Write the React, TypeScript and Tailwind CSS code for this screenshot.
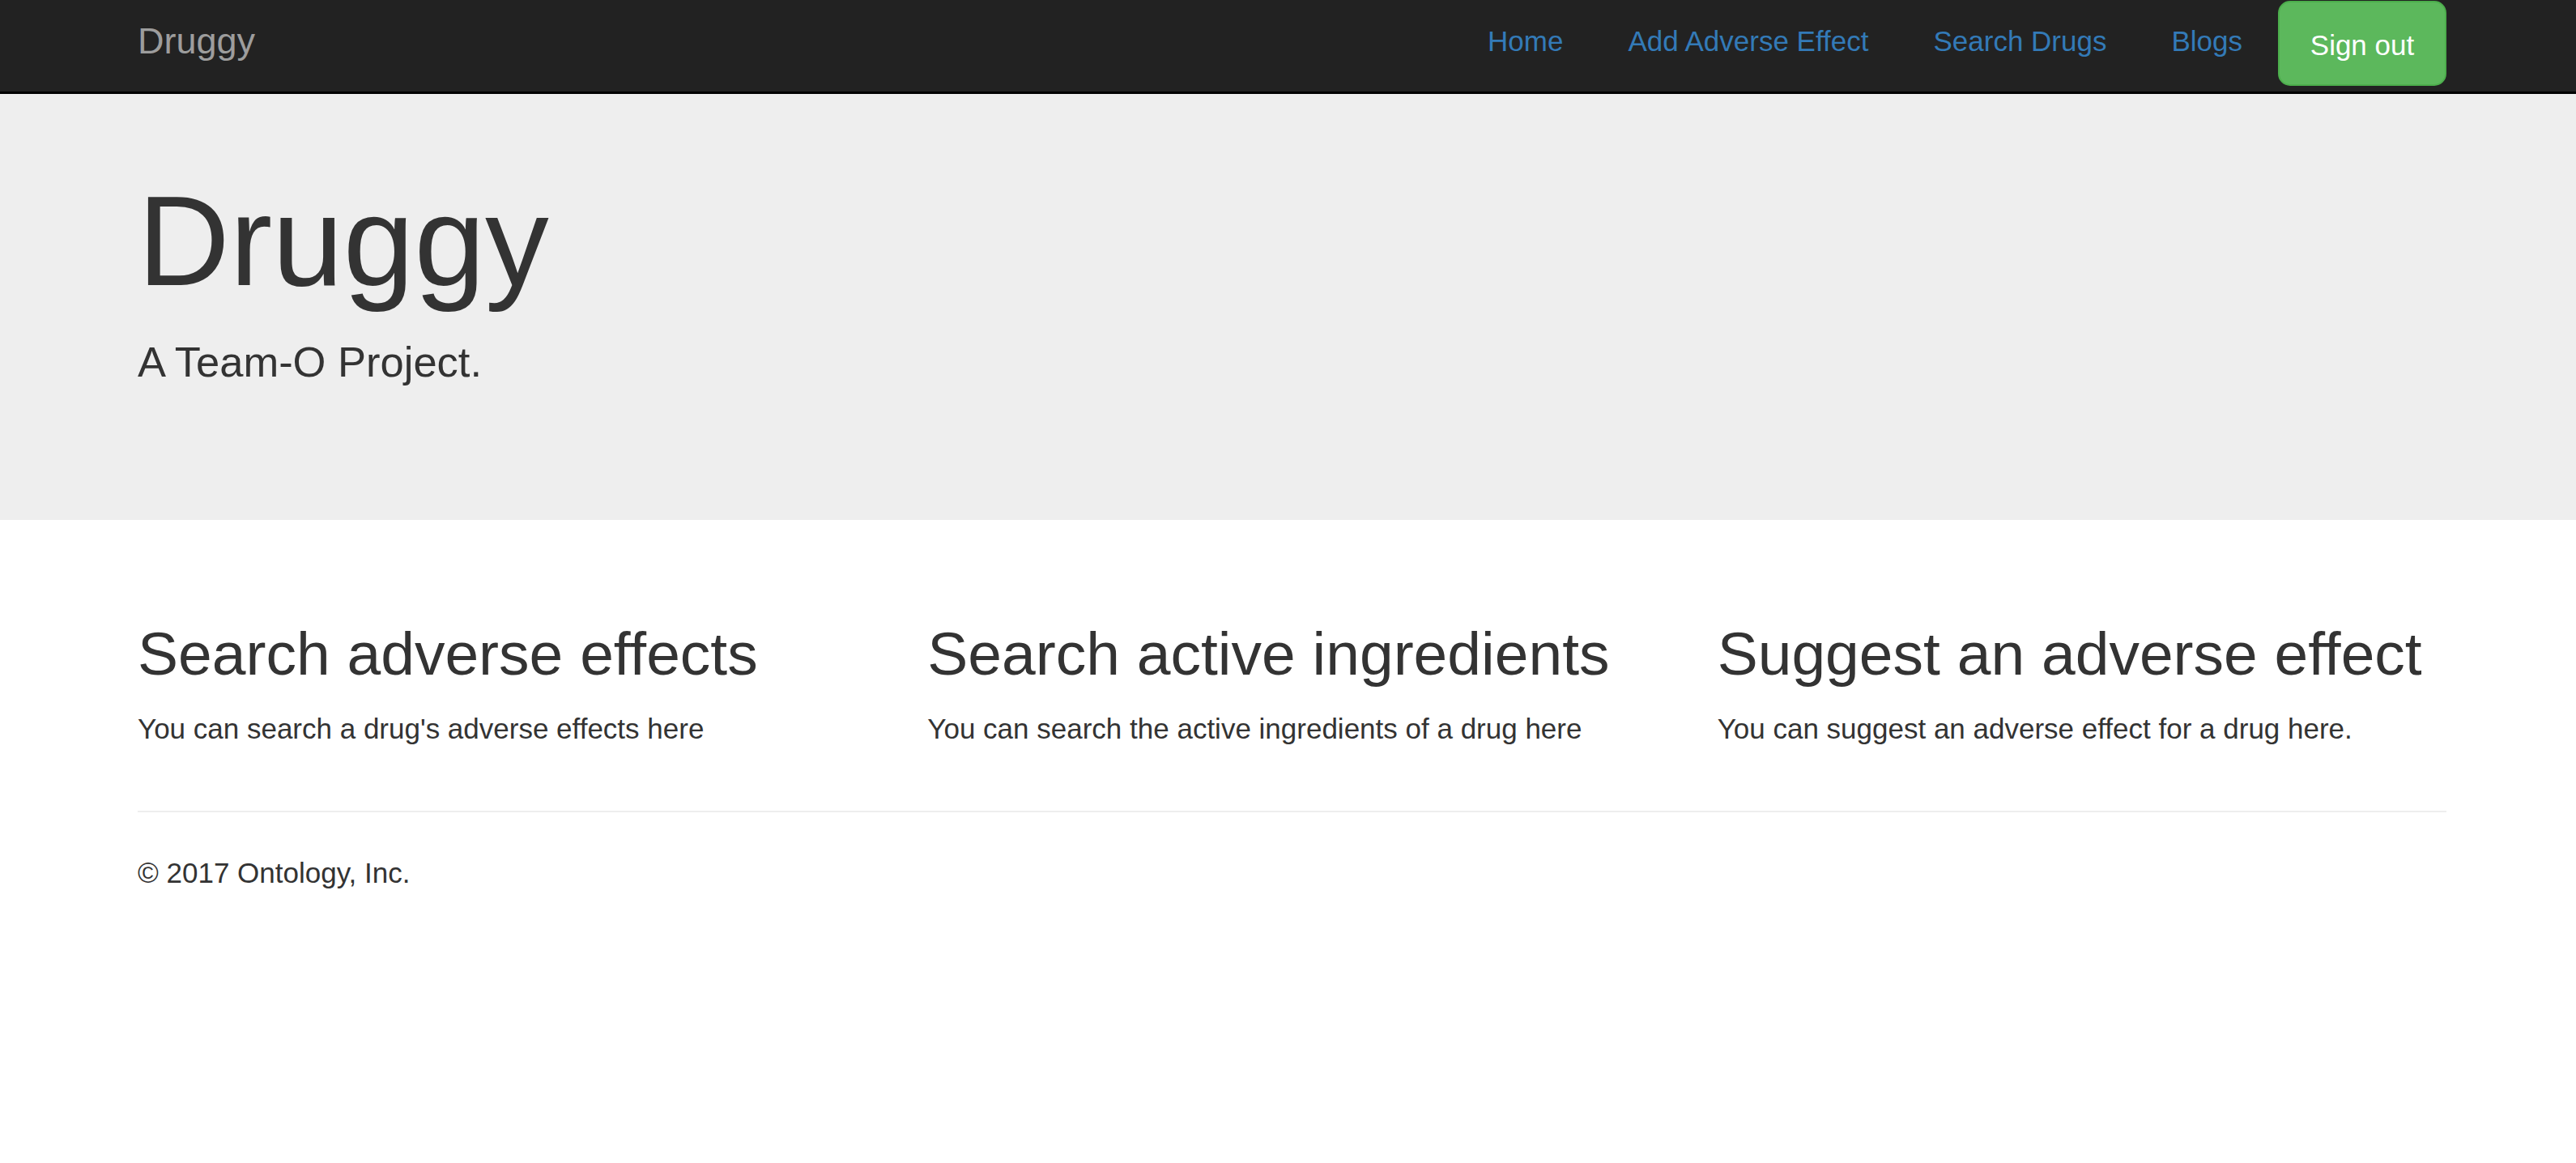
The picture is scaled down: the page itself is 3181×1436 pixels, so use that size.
const links = ['Home', 'Add Adverse Effect', 'Search Drugs', 'Blogs'];

const features = [
  { title: 'Search adverse effects', text: "You can search a drug's adverse effects here" },
  { title: 'Search active ingredients', text: 'You can search the active ingredients of a drug here' },
  { title: 'Suggest an adverse effect', text: 'You can suggest an adverse effect for a drug here.' },
];

export default function App() {
  return (
    <div className="min-h-screen bg-white text-[#333] font-['Liberation_Sans',Arial,sans-serif]">
      <nav className="h-[116px] bg-[#222] border-b-[3px] border-black">
        <div className="ml-[170px] w-[2851px] flex justify-between items-start">
          <a href="#" className="text-[45px] leading-[102px] text-[#9d9d9d]">
            Druggy
          </a>
          <div className="flex items-start">
            {links.map((l) => (
              <a key={l} href="#" className="px-[40px] text-[35px] leading-[102px] text-[#337ab7]">
                {l}
              </a>
            ))}
            <button className="ml-[4px] mt-[1px] h-[105px] w-[208px] rounded-[15px] border-[2.5px] border-[#4cae4c] bg-[#5cb85c] pt-[6px] text-[35px] text-white">
              Sign out
            </button>
          </div>
        </div>
      </nav>

      <div className="bg-[#eee] pt-[95px] pb-[120px]">
        <div className="ml-[170px] w-[2851px]">
          <h1 className="text-[157.5px] leading-[173px] mb-[25px]">Druggy</h1>
          <p className="text-[52.5px] leading-[75px] mb-[37.5px]">A Team-O Project.</p>
        </div>
      </div>

      <div className="ml-[170px] w-[2851px] pt-[124px]">
        <div className="grid grid-cols-3 gap-x-[75px]">
          {features.map((f) => (
            <div key={f.title}>
              <h2 className="text-[75px] leading-[82.5px] mb-[27px]">{f.title}</h2>
              <p className="text-[35px] leading-[50px] mb-[25px]">{f.text}</p>
            </div>
          ))}
        </div>
        <hr className="mt-[51px] mb-[50px] border-t-[2.5px] border-[#eee]" />
        <footer>
          <p className="text-[35px] leading-[50px]">© 2017 Ontology, Inc.</p>
        </footer>
      </div>
    </div>
  );
}
